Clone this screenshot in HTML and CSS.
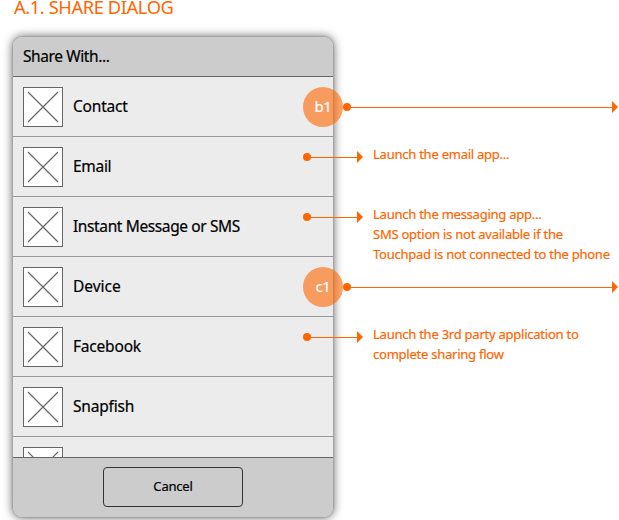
FILE: index.html
```html
<!DOCTYPE html>
<html lang="en">
<head>
<meta charset="utf-8">
<title>Share Dialog</title>
<link rel="stylesheet" href="styles.css">
</head>
<body>
<svg class="defs" width="0" height="0">
  <symbol id="cross" viewBox="0 0 38 38"><path d="M4 4L34 34M34 4L4 34" fill="none" stroke="#666" stroke-width="1.15"/></symbol>
  <symbol id="arrow" viewBox="0 0 6 12"><path d="M0 0L6 6L0 12Z" fill="#f60"/></symbol>
</svg>
<h1 class="title">A.1. SHARE DIALOG</h1>
<main class="stage">
  <section class="dialog">
    <header class="head"><span class="head-text">Share With...</span></header>
    <ul class="list">
      <li class="row"><svg class="thumb"><use href="#cross"/></svg><span class="contact">Contact</span></li>
      <li class="row"><svg class="thumb"><use href="#cross"/></svg><span class="email">Email</span></li>
      <li class="row"><svg class="thumb"><use href="#cross"/></svg><span class="sms">Instant Message or SMS</span></li>
      <li class="row"><svg class="thumb"><use href="#cross"/></svg><span class="device">Device</span></li>
      <li class="row"><svg class="thumb"><use href="#cross"/></svg><span class="facebook">Facebook</span></li>
      <li class="row"><svg class="thumb"><use href="#cross"/></svg><span class="snapfish">Snapfish</span></li>
      <li class="row"><svg class="thumb"><use href="#cross"/></svg></li>
    </ul>
    <footer class="foot"><button class="cancel" type="button">Cancel</button></footer>
  </section>
  <aside class="notes">
    <div class="note"><span class="badge">b1</span><div class="link long"><i class="dot"></i><i class="line"></i><svg class="arrow"><use href="#arrow"/></svg></div></div>
    <div class="note"><div class="link"><i class="dot"></i><i class="line"></i><svg class="arrow"><use href="#arrow"/></svg></div><p class="text">Launch the email app...</p></div>
    <div class="note"><div class="link"><i class="dot"></i><i class="line"></i><svg class="arrow"><use href="#arrow"/></svg></div><p class="text">Launch the messaging app...<br>SMS option is not available if the<br>Touchpad is not connected to the phone</p></div>
    <div class="note"><span class="badge">c1</span><div class="link long"><i class="dot"></i><i class="line"></i><svg class="arrow"><use href="#arrow"/></svg></div></div>
    <div class="note"><div class="link"><i class="dot"></i><i class="line"></i><svg class="arrow"><use href="#arrow"/></svg></div><p class="text">Launch the 3rd party application to<br>complete sharing flow</p></div>
  </aside>
</main>
</body>
</html>
```
FILE: styles.css
```css
* { box-sizing: border-box; }
html, body { height: 520px; overflow: hidden; }
body {
  margin: 0;
  background: #fff;
  color: #000;
  font-family: "Noto Sans", "Open Sans", sans-serif;
  -webkit-text-stroke: 0.2px currentColor;
}
.defs { display: block; }
.title {
  height: 37px;
  margin: 0;
  padding-left: 14px;
  font-size: 18.3px;
  font-weight: 400;
  line-height: 14px;
  letter-spacing: -0.4px;
  color: #f60;
  white-space: nowrap;
  -webkit-text-stroke: 0;
}
.stage {
  display: grid;
  grid-template-columns: 13px 290px 30px 286px;
}
.dialog {
  grid-area: 1 / 2 / 2 / 4;
  height: 480px;
  display: flex;
  flex-direction: column;
  background: #ececec;
  border-radius: 9px;
  box-shadow: 0 0 2px #777, 0 0 10px 1px rgba(0, 0, 0, .55);
}
.head {
  flex: none;
  height: 40px;
  padding-left: 10px;
  border-bottom: 1px solid #666;
  border-radius: 9px 9px 0 0;
  background: #ccc;
  font-size: 15.5px;
  line-height: 39px;
  letter-spacing: -0.4px;
}
.list {
  flex: 1;
  min-height: 0;
  overflow: hidden;
  margin: 0;
  padding: 0;
  list-style: none;
}
.row {
  display: flex;
  align-items: center;
  gap: 10px;
  height: 60px;
  padding: 1px 10px 0;
  border-bottom: 1px solid #999;
  font-size: 15.5px;
  line-height: 20px;
  letter-spacing: -0.2px;
  white-space: nowrap;
}
.row span { margin-top: -2px; }
.sms { letter-spacing: -0.38px; }
.device { letter-spacing: 0; }
.email { letter-spacing: -0.3px; }
.thumb {
  flex: none;
  width: 40px;
  height: 40px;
  border: 1px solid #666;
  background: #fff;
}
.foot {
  flex: none;
  height: 60px;
  padding-top: 9px;
  border-top: 1px solid #666;
  border-radius: 0 0 9px 9px;
  background: #ccc;
  text-align: center;
}
.cancel {
  width: 140px;
  height: 40px;
  padding: 0 0 2px;
  border: 1px solid #333;
  border-radius: 4px;
  background: transparent;
  color: #000;
  font: 13px "Noto Sans", sans-serif;
  letter-spacing: -0.2px;
}
.notes {
  grid-area: 1 / 3 / 2 / 5;
  padding-top: 40px;
  color: #f60;
  z-index: 1;
}
.note {
  display: flex;
  align-items: flex-start;
  height: 60px;
}
.badge {
  width: 40px;
  height: 40px;
  margin-top: 10px;
  border-radius: 50%;
  background: rgba(255, 102, 0, .6);
  color: #fff;
  font-size: 15px;
  line-height: 38px;
  text-align: center;
  letter-spacing: -0.3px;
}
.link {
  flex: none;
  display: flex;
  align-items: center;
  width: 60px;
  height: 40px;
}
.long {
  width: 275px;
  height: 60px;
}
.dot {
  width: 8px;
  height: 8px;
  border-radius: 50%;
  background: #f60;
}
.line {
  flex: 1;
  height: 1px;
  margin-top: 1px;
  background: #f60;
}
.arrow { width: 6px; height: 12px; }
.text {
  margin: 7px 0 0 10px;
  font-size: 13px;
  line-height: 20px;
  letter-spacing: -0.24px;
  white-space: nowrap;
}
```
